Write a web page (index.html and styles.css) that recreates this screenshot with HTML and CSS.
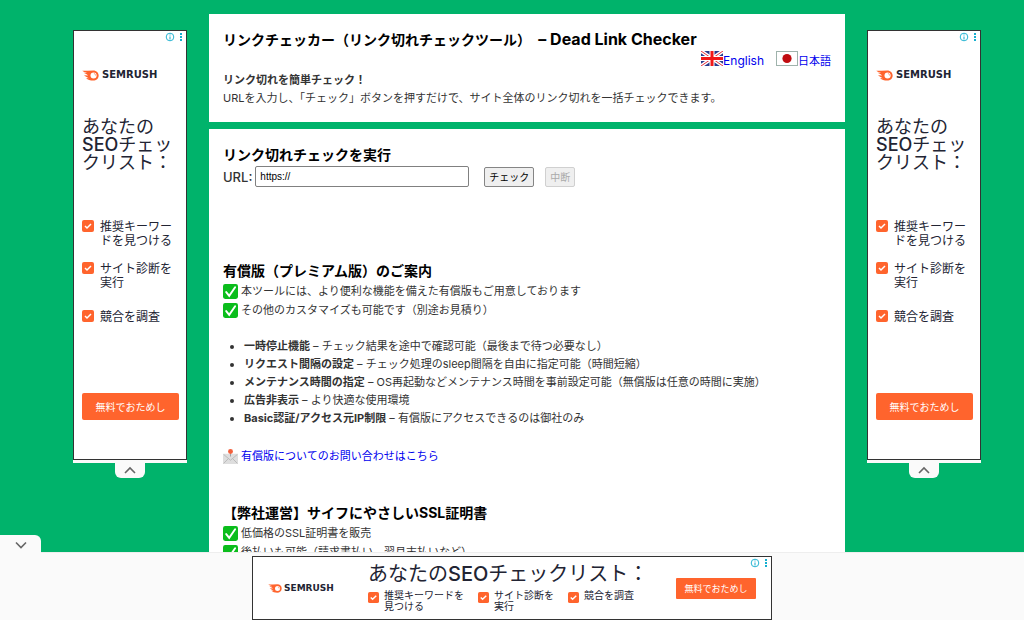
FILE: index.html
```html
<!DOCTYPE html>
<html lang="ja">

<head>
  <meta charset="UTF-8">
  <meta name="viewport" content="width=device-width, initial-scale=1">
  <title>リンクチェッカー（リンク切れチェックツール） – Dead Link Checker</title>
  <link rel="stylesheet" href="styles.css">
</head>

<body>
  <!-- アイコン定義 -->
  <svg class="defs" width="0" height="0" aria-hidden="true">
    <symbol id="semrush" viewBox="0 0 50 32">
      <path fill="#ff642d" d="M1 2 C12 2 22 1 33 1 C43 1 49 8 49 16 C49 25 42 31 33 31 C24 31 17 28 12 23 L20 24 C15 20 9 18 6 15 L18 16 C14 12 8 10 5 8 L15 8 C10 6 4 5 1 2 Z" />
      <circle cx="34" cy="16" r="9" fill="#fff" />
      <path d="M35 10 C38 11 40 13 40 16" fill="none" stroke="#ff642d" stroke-width="2" />
    </symbol>
    <symbol id="ad-check" viewBox="0 0 12 12">
      <rect width="12" height="12" rx="2" fill="#ff642d" />
      <path d="M3 6 L5 8 L9 4" fill="none" stroke="#fff" stroke-width="1.5" />
    </symbol>
    <symbol id="ad-info" viewBox="0 0 20 10">
      <circle cx="5" cy="5" r="3.8" fill="none" stroke="#25b4d2" />
      <path d="M5 4.4 V7.4 M5 2.5 V3.5" stroke="#25b4d2" stroke-width="1.1" />
      <path d="M15 1 h2 v2 h-2 z M15 4 h2 v2 h-2 z M15 7 h2 v2 h-2 z" fill="#16afcf" />
    </symbol>
    <symbol id="tick" viewBox="0 0 14 14">
      <rect width="14" height="14" rx="2" fill="#0bbd1c" />
      <path d="M3 7.5 L5.8 11 L11.3 3" fill="none" stroke="#fff" stroke-width="1.8" stroke-linecap="round" />
    </symbol>
    <symbol id="mail" viewBox="0 0 14 14">
      <rect y="4.5" width="14" height="9.5" rx="1" fill="#dedede" />
      <path d="M.5 13.5 L5 9 M13.5 13.5 L9 9 M.5 5 L7 10.5 L13.5 5" fill="none" stroke="#b5b5b5" stroke-width=".8" />
      <path d="M7 4 V7" stroke="#999" stroke-width=".8" />
      <circle cx="7" cy="2.4" r="2.3" fill="#f2603c" />
    </symbol>
  </svg>

  <div class="page">
    <aside class="side">
      <div class="ad">
        <svg class="ad-info"><use href="#ad-info" /></svg>
        <div class="logo"><svg class="logo-mark"><use href="#semrush" /></svg>SEMRUSH</div>
        <p class="ad-title">あなたの<br><span class="latin">SEO</span>チェッ<br>クリスト：</p>
        <ul class="ad-list">
          <li><svg><use href="#ad-check" /></svg><span>推奨キーワー<br>ドを見つける</span></li>
          <li><svg><use href="#ad-check" /></svg><span>サイト診断を<br>実行</span></li>
          <li><svg><use href="#ad-check" /></svg><span>競合を調査</span></li>
        </ul>
        <button class="ad-button" type="button">無料でおためし</button>
      </div>
      <button class="side-tab" type="button" aria-label="閉じる">
        <svg width="14" height="8" viewBox="0 0 14 8"><path d="M2 7 L7 2 L12 7" fill="none" stroke="#666" stroke-width="1.6" /></svg>
      </button>
    </aside>

    <main>
      <section class="panel intro">
        <h1>リンクチェッカー（リンク切れチェックツール） <span class="latin">– Dead Link Checker</span></h1>
        <div class="lang">
          <a href="#en"><svg width="22" height="15" viewBox="0 0 22 15">
              <rect width="22" height="15" fill="#2a3a8c" />
              <path d="M0 0 L22 15 M22 0 L0 15" stroke="#fff" stroke-width="3.6" />
              <path d="M0 0 L22 15 M22 0 L0 15" stroke="#e8303a" stroke-width="1" />
              <path d="M11 0 V15 M0 7.5 H22" stroke="#fff" stroke-width="5" />
              <path d="M11 0 V15 M0 7.5 H22" stroke="#f21818" stroke-width="3" />
            </svg>English</a>
          <a href="#ja"><svg width="22" height="15" viewBox="0 0 22 15">
              <rect x=".5" y=".5" width="21" height="14" fill="#fff" stroke="#9fb3ac" />
              <circle cx="11" cy="7.5" r="4.6" fill="#c00c10" />
            </svg><span class="ja">日本語</span></a>
        </div>
        <p><b>リンク切れを簡単チェック！</b></p>
        <p>URLを入力し、「チェック」ボタンを押すだけで、サイト全体のリンク切れを一括チェックできます。</p>
      </section>

      <section class="panel">
        <h2>リンク切れチェックを実行</h2>
        <form class="check-form">
          <label for="url">URL:</label>
          <input type="text" id="url" name="url" value="https://">
          <button type="button">チェック</button>
          <button type="button" disabled>中断</button>
        </form>

        <h2>有償版（プレミアム版）のご案内</h2>
        <p class="icon-line"><svg><use href="#tick" /></svg>本ツールには、より便利な機能を備えた有償版もご用意しております</p>
        <p class="icon-line"><svg><use href="#tick" /></svg>その他のカスタマイズも可能です（別途お見積り）</p>
        <ul class="features">
          <li><b>一時停止機能</b> – チェック結果を途中で確認可能（最後まで待つ必要なし）</li>
          <li><b>リクエスト間隔の設定</b> – チェック処理のsleep間隔を自由に指定可能（時間短縮）</li>
          <li><b>メンテナンス時間の指定</b> – OS再起動などメンテナンス時間を事前設定可能（無償版は任意の時間に実施）</li>
          <li><b>広告非表示</b> – より快適な使用環境</li>
          <li><b>Basic認証/アクセス元IP制限</b> – 有償版にアクセスできるのは御社のみ</li>
        </ul>
        <p class="icon-line contact"><svg><use href="#mail" /></svg><a href="#contact">有償版についてのお問い合わせはこちら</a></p>

        <h2>【弊社運営】サイフにやさしいSSL証明書</h2>
        <p class="icon-line"><svg><use href="#tick" /></svg>低価格のSSL証明書を販売</p>
        <p class="icon-line"><svg><use href="#tick" /></svg>後払いも可能（請求書払い、翌月末払いなど）</p>
      </section>
    </main>

    <aside class="side">
      <div class="ad">
        <svg class="ad-info"><use href="#ad-info" /></svg>
        <div class="logo"><svg class="logo-mark"><use href="#semrush" /></svg>SEMRUSH</div>
        <p class="ad-title">あなたの<br><span class="latin">SEO</span>チェッ<br>クリスト：</p>
        <ul class="ad-list">
          <li><svg><use href="#ad-check" /></svg><span>推奨キーワー<br>ドを見つける</span></li>
          <li><svg><use href="#ad-check" /></svg><span>サイト診断を<br>実行</span></li>
          <li><svg><use href="#ad-check" /></svg><span>競合を調査</span></li>
        </ul>
        <button class="ad-button" type="button">無料でおためし</button>
      </div>
      <button class="side-tab" type="button" aria-label="閉じる">
        <svg width="14" height="8" viewBox="0 0 14 8"><path d="M2 7 L7 2 L12 7" fill="none" stroke="#666" stroke-width="1.6" /></svg>
      </button>
    </aside>
  </div>

  <!-- 下部固定広告 -->
  <footer class="anchor">
    <button class="anchor-tab" type="button" aria-label="広告を隠す">
      <svg width="12" height="8" viewBox="0 0 12 8"><path d="M1 1.5 L6 6.5 L11 1.5" fill="none" stroke="#666" stroke-width="1.6" /></svg>
    </button>
    <div class="banner">
      <svg class="ad-info"><use href="#ad-info" /></svg>
      <div class="logo small"><svg class="logo-mark"><use href="#semrush" /></svg>SEMRUSH</div>
      <div class="banner-body">
        <p class="banner-title">あなたの<span class="latin">SEO</span>チェックリスト：</p>
        <ul class="banner-list">
          <li><svg><use href="#ad-check" /></svg><span>推奨キーワードを<br>見つける</span></li>
          <li><svg><use href="#ad-check" /></svg><span>サイト診断を<br>実行</span></li>
          <li><svg><use href="#ad-check" /></svg><span>競合を調査</span></li>
        </ul>
      </div>
      <button class="ad-button small" type="button">無料でおためし</button>
    </div>
  </footer>
</body>

</html>
```
FILE: styles.css
```css
* {
  box-sizing: border-box;
}

body {
  margin: 0;
  background: #00b36b;
  color: #333;
  font-family: Inter, "Noto Sans CJK JP", sans-serif;
  font-size: 11px;
  line-height: 18px;
}

h1, h2, p, ul {
  margin: 0;
  padding: 0;
}

button {
  padding: 0;
  font-family: inherit;
}

a {
  color: #0000ee;
  text-decoration: none;
}

.defs {
  position: absolute;
}

.page {
  display: grid;
  grid-template-columns: 114px 1fr 114px;
  gap: 22px;
  align-items: start;
  padding: 14px 43px 0 73px;
}

/* メイン */
.panel {
  padding: 17px 14px 15px;
  margin-bottom: 7px;
  background: #fff;
}

.panel.intro {
  padding-top: 16px;
}

h1, h2 {
  font-size: 14px;
  line-height: 18px;
  color: #000;
}

h1 .latin {
  margin-left: 4px;
  font-size: 16px;
}

h2 {
  margin-bottom: 2px;
}

.lang {
  display: flex;
  justify-content: flex-end;
  gap: 12px;
  height: 22px;
  padding-top: 2px;
  font-size: 12px;
}

.lang a {
  display: flex;
  align-items: flex-start;
  line-height: 20px;
}

.lang .ja {
  font-size: 11px;
}

.check-form {
  display: flex;
  align-items: center;
  margin-bottom: 75px;
}

.check-form label {
  margin-right: 3px;
  font-size: 13px;
  font-weight: 500;
}

.check-form input {
  width: 214px;
  height: 21px;
  margin-right: 15px;
  padding: 0 4px;
  border: 1px solid #808080;
  border-radius: 2px;
  font-family: "Liberation Sans", sans-serif;
  font-size: 10px;
}

.check-form button {
  height: 20px;
  margin-right: 11px;
  padding: 0 4px;
  border: 1px solid #858585;
  border-radius: 2px;
  background: #efefef;
  color: #000;
  font-size: 10px;
}

.check-form button:disabled {
  border-color: #d0d0d0;
  color: #aaa;
}

.icon-line {
  display: flex;
  align-items: center;
  gap: 3px;
  line-height: 19px;
}

.icon-line svg {
  width: 15px;
  height: 15px;
}

.features {
  margin: 17px 0 20px;
  padding-left: 21px;
}

.contact {
  margin-bottom: 38px;
}

/* 広告 */
.side {
  margin-top: 16px;
  text-align: center;
}

.ad {
  position: relative;
  padding: 36px 8px 39px;
  border: 1px solid #333;
  background: #fff;
  color: #222433;
  text-align: left;
}

.ad-info {
  position: absolute;
  top: 1px;
  right: 1px;
  width: 20px;
  height: 10px;
}

.logo {
  display: flex;
  align-items: center;
  gap: 3px;
  height: 16px;
  font-family: "DejaVu Sans", sans-serif;
  font-size: 10px;
  font-weight: bold;
}

.logo-mark {
  width: 17px;
  height: 11px;
}

.ad-title {
  margin-top: 35px;
  font-size: 18px;
  line-height: 18px;
}

.ad-title .latin, .banner-title .latin {
  font-weight: 500;
}

.ad-list {
  margin-top: 48px;
  list-style: none;
  font-size: 12px;
  line-height: 14px;
}

.ad-list li {
  display: flex;
  gap: 6px;
  min-height: 28px;
  margin-bottom: 14px;
  white-space: nowrap;
}

.ad-list li:last-child {
  margin-top: 20px;
}

.ad-list svg {
  flex: none;
  width: 12px;
  height: 12px;
}

.ad-button {
  display: block;
  width: 97px;
  height: 27px;
  border: 0;
  border-radius: 2px;
  background: #ff642d;
  color: #fff;
  font-size: 10px;
}

.ad-list + .ad-button {
  margin-top: 55px;
}

.side-tab {
  width: 100%;
  height: 18px;
  border: 0;
  border-top: 3px solid #fafafa;
  background: none;
}

.side-tab svg {
  display: block;
  width: 30px;
  height: 15px;
  margin: 0 auto;
  padding: 3px 8px 4px;
  border-radius: 0 0 6px 6px;
  background: #fafafa;
}

.anchor {
  position: fixed;
  right: 0;
  bottom: 0;
  left: 0;
  padding-top: 3px;
  border-top: 1px solid #eee;
  background: #fafafa;
}

.anchor-tab {
  position: absolute;
  top: -18px;
  left: 0;
  width: 41px;
  height: 18px;
  border: 0;
  border-radius: 0 6px 0 0;
  background: #fafafa;
}

.banner {
  position: relative;
  display: flex;
  width: 520px;
  height: 64px;
  margin: 0 auto;
  padding: 0 15px;
  border: 1px solid #333;
  background: #fff;
  color: #222433;
}

.banner .ad-info {
  right: 1px;
}

.logo.small {
  gap: 2px;
  width: 100px;
  height: 62px;
  font-size: 9px;
}

.logo.small .logo-mark {
  width: 14px;
  height: 9px;
}

.banner-body {
  flex: 1;
}

.banner-title {
  padding: 5px 0 4px;
  font-size: 20px;
  line-height: 24px;
}

.banner-list {
  display: flex;
  gap: 14px;
  list-style: none;
  font-size: 10px;
  line-height: 11px;
  white-space: nowrap;
}

.banner-list li {
  display: flex;
  gap: 5px;
}

.banner-list svg {
  width: 11px;
  height: 11px;
  margin-top: 2px;
}

.ad-button.small {
  align-self: center;
  width: 80px;
  height: 21px;
  border-radius: 1px;
  font-size: 9px;
}
```
